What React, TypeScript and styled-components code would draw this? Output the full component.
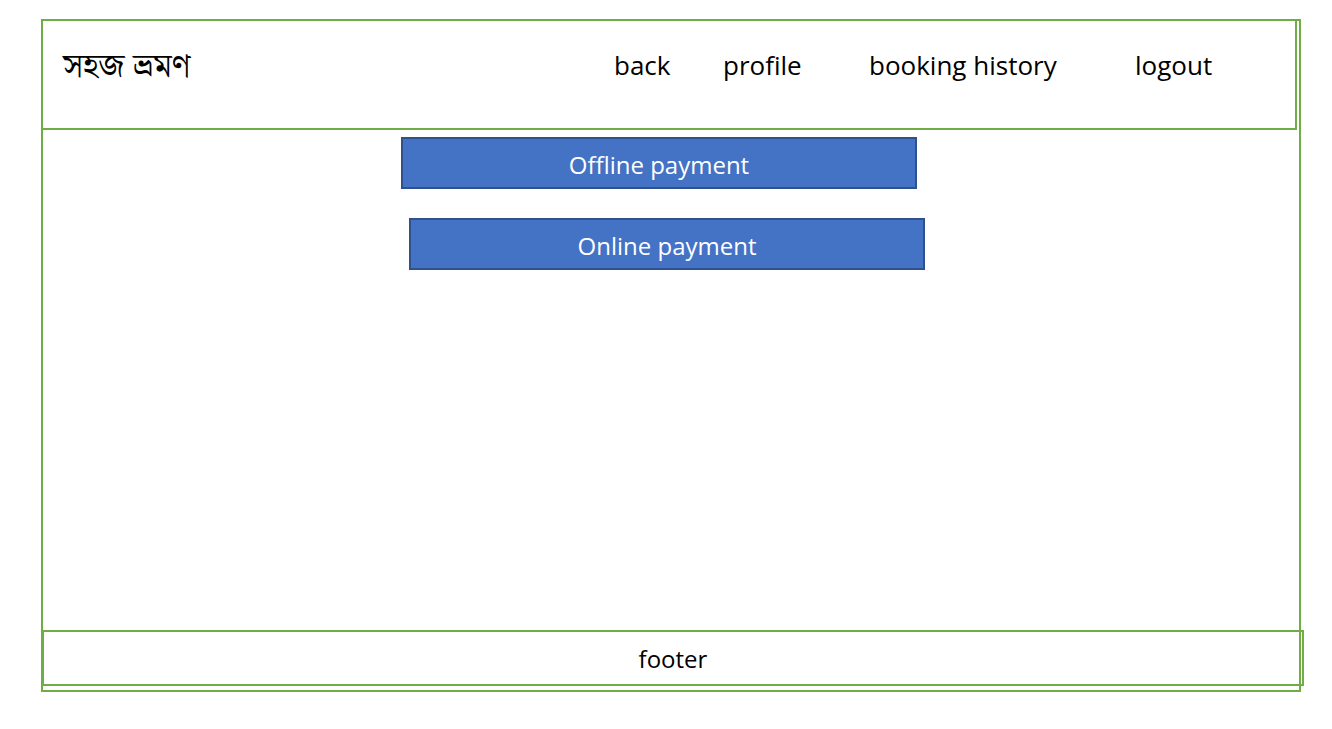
import React from 'react';
import styled, { createGlobalStyle } from 'styled-components';

const GlobalStyle = createGlobalStyle`
    body {
        margin: 0;
        background: #ffffff;
        font-family: "Open Sans", "Noto Sans", sans-serif;
    }
`;

const navLinks = ['back', 'profile', 'booking history', 'logout'];

export default function App() {
    return (
        <React.Fragment>
            <GlobalStyle />
            <Frame>
                <Header>
                    <Logo>সহজ ভ্রমণ</Logo>
                    {navLinks.map((label) => (
                        <NavLink key={label}>{label}</NavLink>
                    ))}
                </Header>
                <Main>
                    <PayButton $shift={358}>Offline payment</PayButton>
                    <PayButton $shift={366}>Online payment</PayButton>
                </Main>
                <Footer>footer</Footer>
            </Frame>
        </React.Fragment>
    );
}

const Frame = styled.div`
    display: flex;
    flex-direction: column;
    box-sizing: border-box;
    width: 1260px;
    height: 673px;
    margin: 19px 0 0 41px;
    border: 2px solid #70ad47;
`;

const Header = styled.header`
    display: grid;
    grid-template-columns: 551px 109px 146px 266px auto;
    align-items: start;
    box-sizing: border-box;
    height: 109px;
    margin-right: 2px;
    padding: 27px 0 0 20px;
    border-right: 2px solid #70ad47;
    border-bottom: 2px solid #70ad47;
`;

const Logo = styled.div`
    margin-top: 0;
    font-family: "Noto Serif Bengali", "Noto Sans Bengali", "Lohit Bengali", "Noto Sans", sans-serif;
    font-size: 33px;
    line-height: 40px;
    white-space: nowrap;
    color: #000;
`;

const NavLink = styled.a`
    white-space: nowrap;
    font-size: 26px;
    line-height: 34px;
    color: #000;
    cursor: pointer;
`;

const Main = styled.main`
    flex: 1;
    display: flex;
    flex-direction: column;
    align-items: flex-start;
    gap: 29px;
    padding-top: 7px;
`;

const PayButton = styled.button<{ $shift: number }>`
    box-sizing: border-box;
    width: 516px;
    height: 52px;
    margin-left: ${(p) => p.$shift}px;
    padding: 3px 0 0;
    background: #4472c4;
    border: 2px solid #2f528f;
    color: #ffffff;
    font-family: "Open Sans", "Noto Sans", sans-serif;
    font-size: 24px;
    line-height: 1;
`;

const Footer = styled.footer`
    box-sizing: border-box;
    height: 56px;
    margin: 0 -5px 4px -1px;
    border: 2px solid #70ad47;
    display: flex;
    align-items: center;
    justify-content: center;
    font-size: 24px;
    color: #000;
`;
